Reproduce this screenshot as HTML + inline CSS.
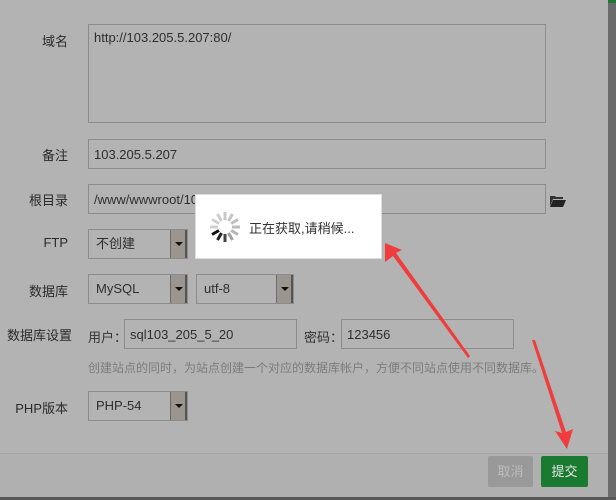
<!DOCTYPE html>
<html><head><meta charset="utf-8"><style>
*{margin:0;padding:0;box-sizing:border-box}
body{width:616px;height:500px;background:#b3b3b3;position:relative;overflow:hidden;font-family:"Liberation Sans","Noto Sans CJK SC",sans-serif;font-size:13px;color:#333}
.a{position:absolute}
.lbl{position:absolute;text-align:right;width:68px;color:#2a2a2a}
.box{position:absolute;border:1px solid #8c8c8c;background:#b3b3b3;padding:0 5px;color:#2e2e2e;line-height:30px}
.sel{position:absolute;border:1px solid #8c8c8c;background:#b3b3b3;color:#2e2e2e;line-height:28px;padding-left:7px}
.sel i{position:absolute;right:0;top:0;width:17px;height:28px;background:#9a968f;border-left:1px solid #6a6a6a;border-right:2px solid #555}
.sel i:after{content:"";position:absolute;left:4px;top:12px;border:4px solid transparent;border-top:4px solid #111;border-bottom:0}
</style></head><body>
<div class="a" style="left:608px;top:0;width:8px;height:500px;background:#6b6b6b"></div>
<div class="a" style="left:608px;top:0;width:8px;height:3px;background:#1e7a35"></div>
<div class="a" style="left:0;top:453px;width:608px;height:1px;background:#a5a5a5"></div>
<div class="a" style="left:0;top:454px;width:608px;height:43px;background:#b0b0b0"></div>
<div class="a" style="left:0;top:497px;width:616px;height:3px;background:#585858"></div>

<div class="lbl" style="left:0;top:31px">域名</div>
<div class="box" style="left:88px;top:24px;width:458px;height:99px;line-height:26px">http://103.205.5.207:80/</div>
<div class="lbl" style="left:0;top:145px">备注</div>
<div class="box" style="left:88px;top:139px;width:458px;height:30px">103.205.5.207</div>
<div class="lbl" style="left:0;top:190px">根目录</div>
<div class="box" style="left:88px;top:184px;width:458px;height:30px">/www/wwwroot/103.205.5.207</div>
<svg class="a" style="left:549px;top:194px" width="18" height="14"><path d="M1 2h5l1 1h7v2H4L1 12z" fill="#333"/><path d="M4 6h13l-3 7H1z" fill="#222"/></svg>
<div class="lbl" style="left:0;top:235px">FTP</div>
<div class="sel" style="left:88px;top:229px;width:100px;height:30px">不创建<i></i></div>
<div class="lbl" style="left:0;top:281px">数据库</div>
<div class="sel" style="left:88px;top:274px;width:100px;height:30px">MySQL<i></i></div>
<div class="sel" style="left:196px;top:274px;width:98px;height:30px">utf-8<i></i></div>
<div class="a" style="left:7px;top:325px;color:#2a2a2a">数据库设置</div>
<div class="a" style="left:88px;top:327px">用户：</div>
<div class="box" style="left:124px;top:319px;width:173px;height:30px">sql103_205_5_20</div>
<div class="a" style="left:304px;top:327px;color:#333">密码：</div>
<div class="box" style="left:341px;top:319px;width:173px;height:30px">123456</div>
<div class="a" style="left:88px;top:359px;color:#7c7c7c;font-size:12px">创建站点的同时，为站点创建一个对应的数据库帐户，方便不同站点使用不同数据库。</div>
<div class="lbl" style="left:0;top:398px">PHP版本</div>
<div class="sel" style="left:88px;top:391px;width:100px;height:30px">PHP-54<i></i></div>
<div class="a" style="left:488px;top:456px;width:45px;height:31px;background:#999;color:#bdbdbd;text-align:center;line-height:31px;border-radius:2px">取消</div>
<div class="a" style="left:541px;top:456px;width:47px;height:31px;background:#1a7a30;color:#e8e8e8;text-align:center;line-height:31px;border-radius:2px">提交</div>

<div class="a" style="left:195px;top:194px;width:187px;height:65px;background:#fff;border:1px solid #ddd"></div>
<div class="a" style="left:249px;top:218px;color:#333;font-size:13px">正在获取,请稍候...</div>
<svg class="a" style="left:207px;top:209px" width="36" height="36" viewBox="-18 -18 36 36">
<g stroke-width="3" stroke-linecap="butt">
<line x1="0" y1="-7" x2="0" y2="-15" stroke="#c8c8c8" transform="rotate(0)"/>
<line x1="0" y1="-7" x2="0" y2="-15" stroke="#c4c4c4" transform="rotate(30)"/>
<line x1="0" y1="-7" x2="0" y2="-15" stroke="#c0c0c0" transform="rotate(60)"/>
<line x1="0" y1="-7" x2="0" y2="-15" stroke="#bcbcbc" transform="rotate(90)"/>
<line x1="0" y1="-7" x2="0" y2="-15" stroke="#b4b4b4" transform="rotate(120)"/>
<line x1="0" y1="-7" x2="0" y2="-15" stroke="#a0a0a0" transform="rotate(150)"/>
<line x1="0" y1="-7" x2="0" y2="-15" stroke="#444" transform="rotate(180)"/>
<line x1="0" y1="-7" x2="0" y2="-15" stroke="#222" transform="rotate(210)"/>
<line x1="0" y1="-7" x2="0" y2="-15" stroke="#111" transform="rotate(240)"/>
<line x1="0" y1="-7" x2="0" y2="-15" stroke="#d0d0d0" transform="rotate(270)"/>
<line x1="0" y1="-7" x2="0" y2="-15" stroke="#cfcfcf" transform="rotate(300)"/>
<line x1="0" y1="-7" x2="0" y2="-15" stroke="#cccccc" transform="rotate(330)"/>
</g></svg>

<svg class="a" style="left:0;top:0" width="616" height="500">
<polygon points="468,358 393,256 385,262 385,243 402,250 396,253 470,356" fill="#f03c3c"/>
<polygon points="532,340 562,433 555,431 567,449 573,429 566,432 535,340" fill="#f03c3c"/>
</svg>
</body></html>
